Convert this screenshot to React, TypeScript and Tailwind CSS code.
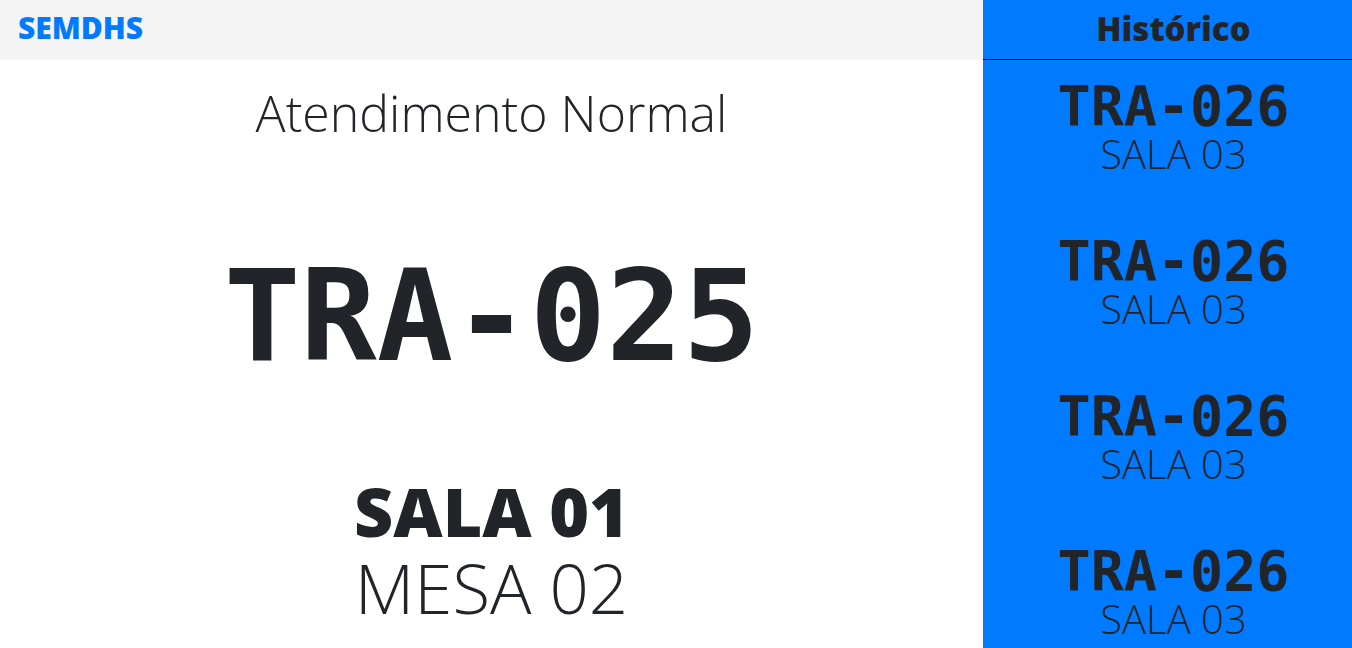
import React from "react";

const items = [1, 2, 3, 4];

export default function App() {
  return (
    <div className="flex h-[648px] w-[1352px] overflow-hidden bg-white text-[#212529]" style={{ fontFamily: "'Open Sans', sans-serif" }}>
      <div className="flex w-[983px] shrink-0 flex-col">
        <div className="flex h-[60px] shrink-0 items-center bg-[#f4f4f4] px-[18px] pb-[5px]">
          <span className="text-[30px] font-extrabold leading-none text-[#007bff]">SEMDHS</span>
        </div>
        <div className="flex flex-col items-center">
          <div className="mt-[25px] text-[50px] font-light leading-[56px]">Atendimento Normal</div>
          <div className="mt-[113px] text-[127px] font-bold leading-[125px]" style={{ fontFamily: "'DejaVu Sans Mono', monospace" }}>TRA-025</div>
          <div className="mt-[98px] text-[68px] font-black leading-[68px]" style={{ fontFamily: "'Noto Sans', sans-serif" }}>SALA 01</div>
          <div className="mt-[8px] text-[69px] font-light leading-[69px]">MESA 02</div>
        </div>
      </div>
      <div className="flex flex-1 flex-col bg-[#007bff]">
        <div className="flex h-[60px] shrink-0 items-center justify-center border-b border-black pl-[12px] pb-[3px]">
          <span className="text-[33px] font-extrabold leading-none">Histórico</span>
        </div>
        {items.map((i) => (
          <div key={i} className="flex h-[155px] shrink-0 flex-col items-center pl-[12px] pt-[19px]">
            <div className="text-[55px] font-bold leading-[54px]" style={{ fontFamily: "'DejaVu Sans Mono', monospace" }}>TRA-026</div>
            <div className="text-[40px] font-light leading-[42px]">SALA 03</div>
          </div>
        ))}
      </div>
    </div>
  );
}
